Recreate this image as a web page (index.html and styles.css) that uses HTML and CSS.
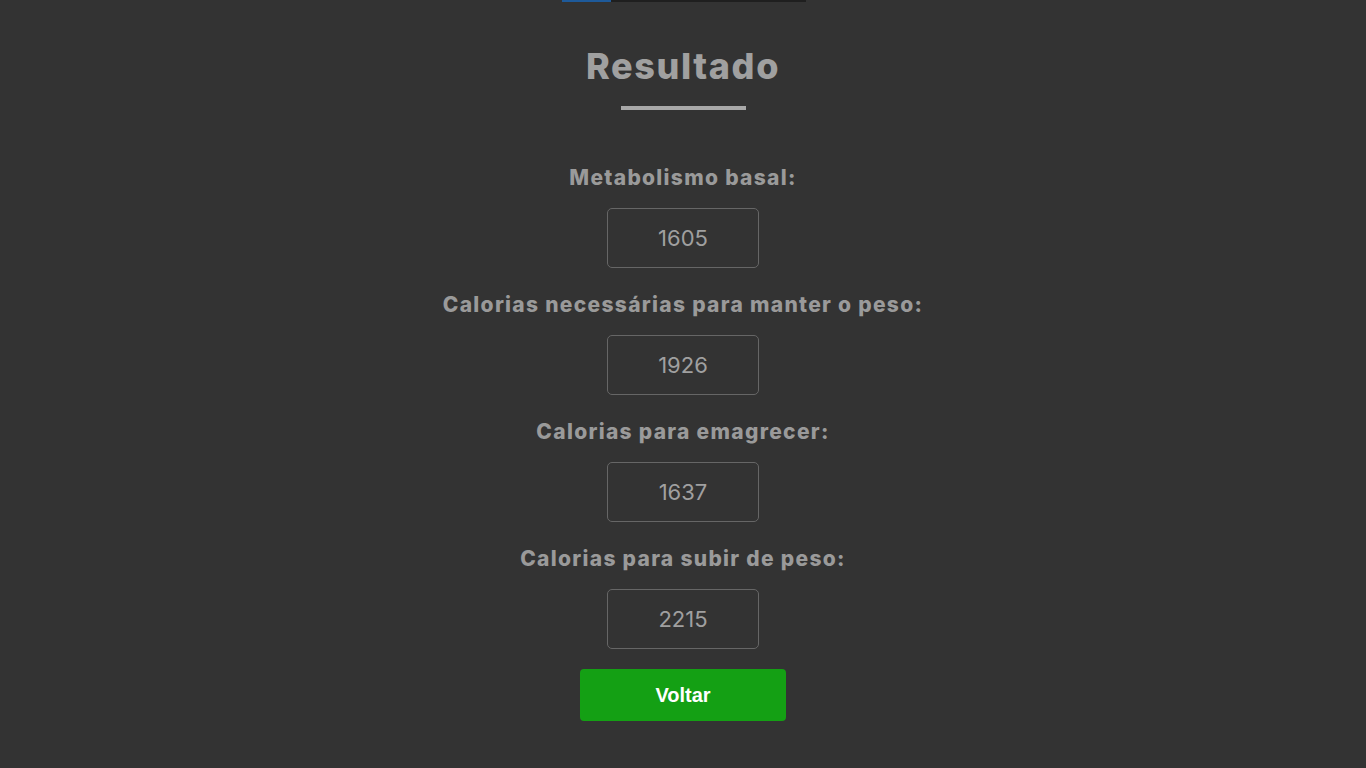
FILE: index.html
```html
<!DOCTYPE html>
<html lang="pt-BR">
<head>
<meta charset="utf-8">
<title>Resultado</title>
<link rel="stylesheet" href="styles.css">
</head>
<body>
<div class="progress"><div class="progress-fill"></div></div>
<main class="result">
  <h1 class="title">Resultado</h1>
  <div class="title-rule"></div>
  <div class="fields">
    <div class="field">
      <label class="field-label">Metabolismo basal:</label>
      <div class="field-value">1605</div>
    </div>
    <div class="field">
      <label class="field-label">Calorias necessárias para manter o peso:</label>
      <div class="field-value">1926</div>
    </div>
    <div class="field">
      <label class="field-label">Calorias para emagrecer:</label>
      <div class="field-value">1637</div>
    </div>
    <div class="field">
      <label class="field-label">Calorias para subir de peso:</label>
      <div class="field-value">2215</div>
    </div>
  </div>
  <button class="back-btn" type="button">Voltar</button>
</main>
</body>
</html>
```
FILE: styles.css
```css
html, body {
  margin: 0;
  padding: 0;
  background: #333333;
}
body {
  font-family: "Inter", "Open Sans", sans-serif;
  color: #9a9a9a;
}
.progress {
  width: 244px;
  height: 2px;
  margin-left: 562px;
  background: #1f1f1f;
  display: flex;
}
.progress-fill {
  width: 49px;
  height: 100%;
  background: #1e5a9a;
}
.result {
  display: flex;
  flex-direction: column;
  align-items: center;
}
.title {
  margin: 42px 0 0;
  font-size: 36px;
  line-height: 44px;
  font-weight: 800;
  color: #a0a0a0;
  letter-spacing: 1.6px;
}
.title-rule {
  width: 125px;
  height: 4px;
  margin-top: 18px;
  background: #a8a8a8;
}
.fields {
  margin-top: 53px;
  display: flex;
  flex-direction: column;
  align-items: center;
  gap: 22px;
}
.field {
  display: flex;
  flex-direction: column;
  align-items: center;
  gap: 15px;
}
.field-label {
  font-size: 21px;
  line-height: 30px;
  font-weight: 800;
  color: #9a9a9a;
  letter-spacing: 1.3px;
}
.field-value {
  box-sizing: border-box;
  width: 152px;
  height: 60px;
  border: 1px solid #666666;
  border-radius: 5px;
  display: flex;
  align-items: center;
  justify-content: center;
  font-size: 22px;
  color: #a0a0a0;
}
.back-btn {
  margin-top: 20px;
  width: 206px;
  height: 52px;
  border: none;
  border-radius: 4px;
  background: #14a014;
  color: #ffffff;
  font-family: "Liberation Sans", Arial, sans-serif;
  font-weight: 700;
  font-size: 20px;
  cursor: pointer;
}
```
